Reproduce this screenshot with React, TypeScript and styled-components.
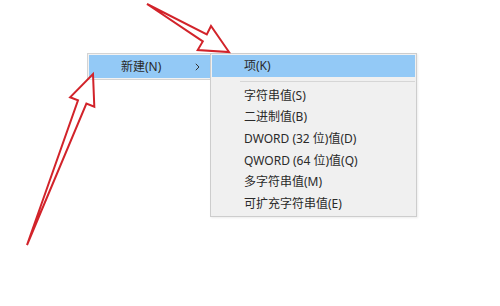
import styled, { createGlobalStyle } from "styled-components";

const GlobalStyle = createGlobalStyle`
  html, body {
    margin: 0;
    padding: 0;
    background: #ffffff;
  }
  body {
    font-family: "Noto Sans", "Noto Sans CJK SC", sans-serif;
  }
`;

const Page = styled.div`
  position: relative;
  width: 500px;
  height: 306px;
  overflow: hidden;
  background: #ffffff;
`;

const Stage = styled.div`
  display: flex;
  align-items: flex-start;
  padding: 53px 0 0 87px;
`;

const ParentMenu = styled.div`
  box-sizing: border-box;
  width: 123px;
  padding: 1px 0 1px 1px;
  border: 1px solid #d4d4d4;
  border-right: none;
  background: #f2f2f2;
`;

const SubMenu = styled.div`
  box-sizing: border-box;
  width: 207px;
  padding: 1px;
  border: 1px solid #cdcdcd;
  background: #f0f0f0;
  box-shadow: 1px 1px 2px rgba(0, 0, 0, 0.08);
`;

const Row = styled.div<{ $active?: boolean; $h?: number; $indent: number }>`
  display: flex;
  align-items: center;
  height: ${(p) => p.$h ?? 21.6}px;
  padding-left: ${(p) => p.$indent}px;
  padding-right: 10px;
  background: ${(p) => (p.$active ? "#93c9f6" : "transparent")};
  color: #2a2a2a;
  font-size: 12px;
  line-height: 1;
  white-space: nowrap;
`;

const Label = styled.span`
  flex: 1;
`;

const Chevron = styled.svg`
  width: 5px;
  height: 8px;
  flex: none;
`;

const Separator = styled.div`
  height: 8px;
  display: flex;
  align-items: center;
  padding-left: 28px;

  &::after {
    content: "";
    flex: 1;
    height: 1px;
    background: #d6d6d6;
  }
`;

const Annotations = styled.svg`
  position: absolute;
  left: 0;
  top: 0;
  width: 500px;
  height: 306px;
  pointer-events: none;
`;

const items = [
  "字符串值(S)",
  "二进制值(B)",
  "DWORD (32 位)值(D)",
  "QWORD (64 位)值(Q)",
  "多字符串值(M)",
  "可扩充字符串值(E)",
];

export default function App() {
  return (
    <Page>
      <GlobalStyle />
      <Stage>
        <ParentMenu>
          <Row $active $h={23} $indent={32}>
            <Label>新建(N)</Label>
            <Chevron viewBox="0 0 5 8">
              <polyline points="0.8,0.8 4,4 0.8,7.2" fill="none" stroke="#333" strokeWidth="1" />
            </Chevron>
          </Row>
        </ParentMenu>
        <SubMenu>
          <Row $active $h={22} $indent={32}>
            <Label>项(K)</Label>
          </Row>
          <Separator />
          {items.map((item) => (
            <Row key={item} $indent={32}>
              <Label>{item}</Label>
            </Row>
          ))}
        </SubMenu>
      </Stage>
      <Annotations viewBox="0 0 500 306">
        <polygon
          points="147,4 206.8,34.4 211,26 229,52 197.7,50 202.8,41.4"
          fill="#ffffff"
          fillOpacity="0.4"
          stroke="#d2232a"
          strokeWidth="2"
          strokeLinejoin="miter"
        />
        <polygon
          points="27,245 78,100.4 70.1,97.3 93,74 94.3,106.7 86.4,103.6"
          fill="#ffffff"
          fillOpacity="0.4"
          stroke="#d2232a"
          strokeWidth="2"
          strokeLinejoin="miter"
        />
      </Annotations>
    </Page>
  );
}
